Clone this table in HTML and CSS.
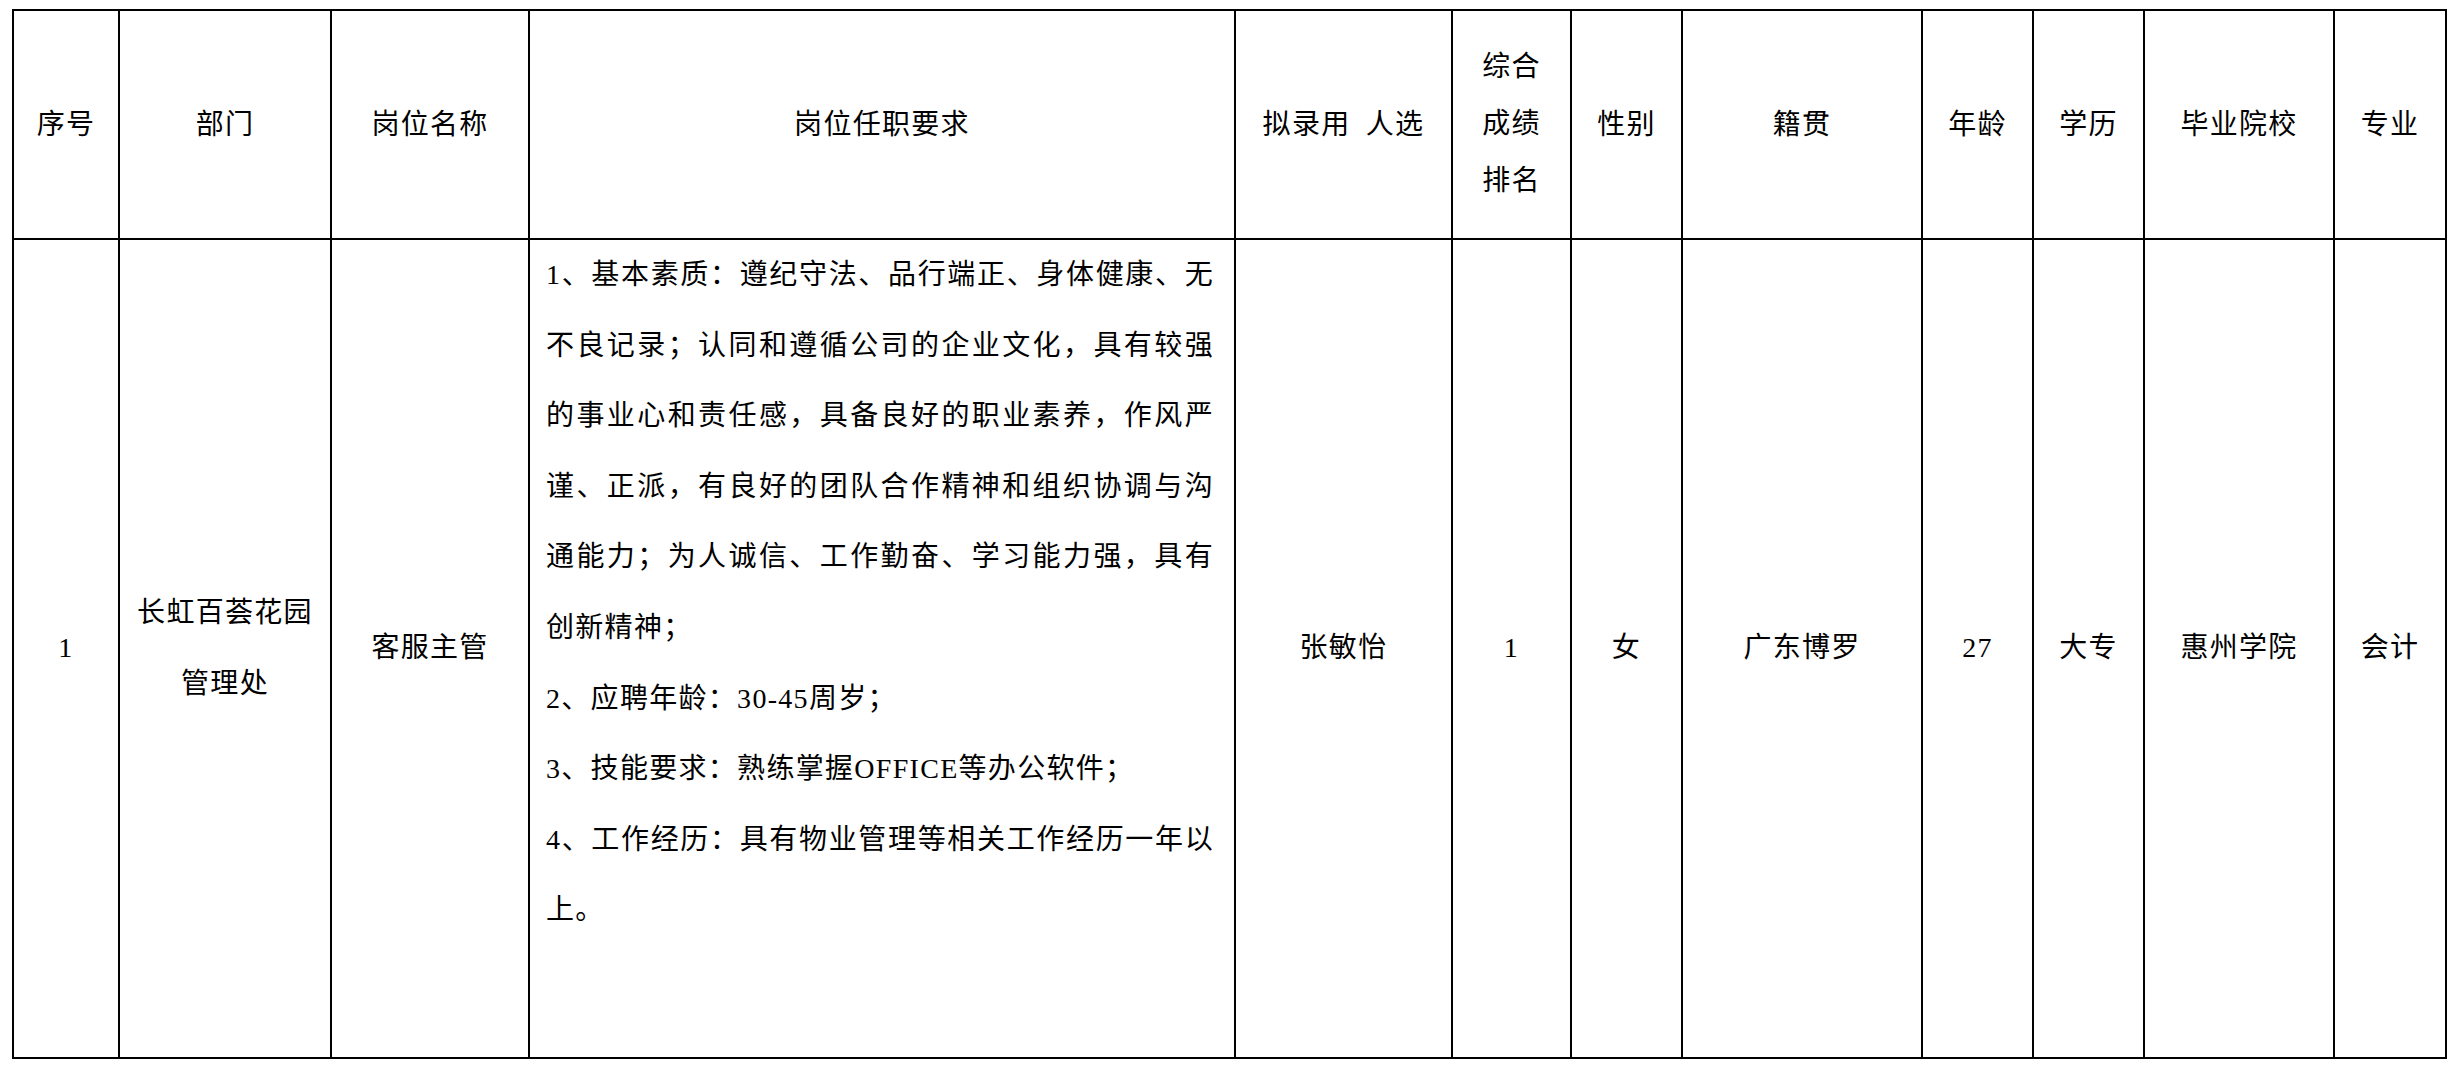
FILE: index.html
```html
<!DOCTYPE html>
<html lang="zh-CN">
<head>
<meta charset="utf-8">
<title>拟录用人员公示</title>
<link rel="stylesheet" href="styles.css">
</head>
<body>
<div class="sheet">
  <div class="cell head">序号</div>
  <div class="cell head">部门</div>
  <div class="cell head">岗位名称</div>
  <div class="cell head">岗位任职要求</div>
  <div class="cell head">拟录用&ensp;人选</div>
  <div class="cell head stack">综合<br>成绩<br>排名</div>
  <div class="cell head">性别</div>
  <div class="cell head">籍贯</div>
  <div class="cell head">年龄</div>
  <div class="cell head">学历</div>
  <div class="cell head">毕业院校</div>
  <div class="cell head">专业</div>

  <div class="cell body">1</div>
  <div class="cell body dept">长虹百荟花园管理处</div>
  <div class="cell body">客服主管</div>
  <div class="cell req">
    <p>1、基本素质：遵纪守法、品行端正、身体健康、无不良记录；认同和遵循公司的企业文化，具有较强的事业心和责任感，具备良好的职业素养，作风严谨、正派，有良好的团队合作精神和组织协调与沟通能力；为人诚信、工作勤奋、学习能力强，具有创新精神；</p>
    <p>2、应聘年龄：30-45周岁；</p>
    <p>3、技能要求：熟练掌握OFFICE等办公软件；</p>
    <p>4、工作经历：具有物业管理等相关工作经历一年以上。</p>
  </div>
  <div class="cell body">张敏怡</div>
  <div class="cell body">1</div>
  <div class="cell body">女</div>
  <div class="cell body">广东博罗</div>
  <div class="cell body">27</div>
  <div class="cell body">大专</div>
  <div class="cell body">惠州学院</div>
  <div class="cell body">会计</div>
</div>
</body>
</html>
```

FILE: styles.css
```css
html, body {
  margin: 0;
  padding: 0;
  background: #ffffff;
}

body {
  font-family: "Liberation Serif", "Noto Sans CJK SC", serif;
  font-size: 28px;
  letter-spacing: 1.3px;
  color: #000000;
}

.sheet {
  display: grid;
  grid-template-columns: 106px 212px 198px 706px 217px 119px 111px 240px 111px 111px 190px 112px;
  grid-template-rows: 229px 819px;
  width: max-content;
  margin: 9px 0 0 12px;
  border-left: 2px solid #000;
  border-top: 2px solid #000;
}

.cell {
  box-sizing: border-box;
  border-right: 2px solid #000;
  border-bottom: 2px solid #000;
  display: flex;
  align-items: center;
  justify-content: center;
  text-align: center;
  padding: 0 10px;
  min-width: 0;
}

.head {
  line-height: 40px;
}

.head.stack {
  line-height: 56.7px;
}

.body {
  line-height: 70.6px;
}

.req {
  display: block;
  text-align: justify;
  line-height: 70.6px;
  padding: 0 20px 0 16px;
}

.req p {
  margin: 0;
}
```
